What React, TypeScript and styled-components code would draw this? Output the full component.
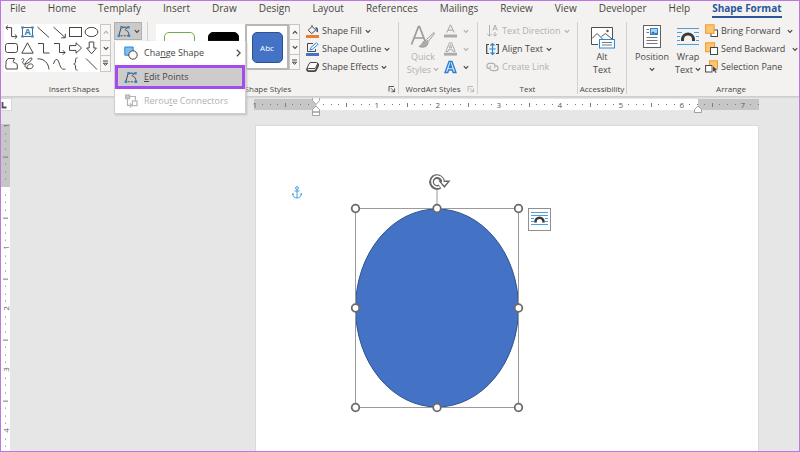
import React from "react";
import styled, { createGlobalStyle, css } from "styled-components";

const INK = "#484644";
const MUTED = "#b3b0ad";
const BLUE = "#2b88d8";
const BRAND = "#2b579a";
const SHAPE = "#4472c4";

const GlobalStyle = createGlobalStyle`
  *, *::before, *::after { box-sizing: border-box; }
  html, body { margin: 0; padding: 0; }
  body {
    font-family: "Open Sans", "Noto Sans", sans-serif;
    font-size: 9px;
    color: ${INK};
    background: #e6e6e6;
  }
  button {
    font: inherit;
    color: inherit;
    background: none;
    border: 0;
    padding: 0;
    margin: 0;
  }
  svg { display: block; flex: none; }
`;

const Frame = styled.div`
  display: flex;
  flex-direction: column;
  height: 100vh;
  min-height: 400px;
  border: 1px solid #b878e6;
  overflow: hidden;
`;

/* ---------- ribbon ---------- */

const Ribbon = styled.header`
  position: relative;
  z-index: 2;
  background: #f3f2f1;
  border-bottom: 1px solid #cfcdcb;
  box-shadow: 0 1px 1px #d8d8d8;
`;

const TabBar = styled.nav`
  display: flex;
  gap: 22px;
  height: 20px;
  padding: 0 9px;
`;

const Tab = styled.button<{ $active?: boolean }>`
  height: 17px;
  font-size: 10px;
  line-height: 14px;
  padding-bottom: 1px;
  white-space: nowrap;
  border-bottom: 2px solid transparent;
  ${(p) =>
    p.$active &&
    css`
      color: ${BRAND};
      font-weight: 700;
      border-bottom-color: ${BRAND};
    `}
`;

const Groups = styled.div`
  display: flex;
  padding: 1px 0 2px;
`;

const Group = styled.section<{ $basis?: number }>`
  display: flex;
  flex-direction: column;
  flex: ${(p) => (p.$basis ? `0 0 ${p.$basis}px` : "1 0 0")};
  min-width: 0;
  height: 72px;
  border-right: 1px solid #d2d0ce;
  &:last-child {
    border-right: 0;
  }
`;

const GroupBody = styled.div<{ $pad?: number; $gap?: number }>`
  display: flex;
  flex: 1;
  align-items: flex-start;
  gap: ${(p) => p.$gap ?? 0}px;
  padding-left: ${(p) => p.$pad ?? 0}px;
`;

const GroupFooter = styled.div<{ $indent?: number }>`
  display: flex;
  align-items: center;
  padding-left: ${(p) => p.$indent ?? 0}px;
`;

const GroupTitle = styled.h2`
  flex: 1;
  margin: 0;
  font-size: 8px;
  font-weight: 400;
  line-height: 10px;
  text-align: center;
  white-space: nowrap;
`;

const Launcher = styled.button<{ $muted?: boolean }>`
  width: 10px;
  height: 10px;
  color: ${(p) => (p.$muted ? MUTED : INK)};
`;

const Gallery = styled.div`
  display: flex;
  margin-top: 2px;
  background: #fff;
`;

const ShapeGrid = styled.div`
  display: grid;
  grid-template-columns: repeat(6, 16px);
  grid-auto-rows: 16px;
`;

const ShapeCell = styled.button`
  width: 16px;
  height: 16px;
`;

const Scroller = styled.div`
  display: flex;
  flex-direction: column;
  width: 11px;
`;

const ScrollButton = styled.button<{ $muted?: boolean }>`
  display: flex;
  flex: 1;
  align-items: center;
  justify-content: center;
  border: 1px solid #c8c6c4;
  background: #f8f7f6;
  color: ${(p) => (p.$muted ? MUTED : INK)};
  & + & {
    border-top: 0;
  }
`;

const Presets = styled.div`
  display: flex;
  height: 46px;
  padding-left: 1px;
`;

const Preset = styled.button<{ $selected?: boolean }>`
  display: flex;
  align-items: center;
  justify-content: center;
  width: 44px;
  height: 46px;
  border: 2px solid ${(p) => (p.$selected ? "#b9b7b5" : "transparent")};
`;

const Swatch = styled.span<{ $fill: string; $line: string }>`
  display: flex;
  align-items: center;
  justify-content: center;
  width: 31px;
  height: 31px;
  border: 1px solid ${(p) => p.$line};
  border-radius: 5px;
  background: ${(p) => p.$fill};
  color: #fff;
  font-size: 8px;
`;

const EditShapeAnchor = styled.div`
  position: relative;
`;

const EditShapeButton = styled.button`
  display: flex;
  align-items: center;
  justify-content: center;
  gap: 3px;
  width: 28px;
  height: 18px;
  background: #cccac8;
  border: 1px solid #b1afad;
`;

const Menu = styled.div`
  position: absolute;
  top: 19px;
  left: 0;
  width: 132px;
  background: #fff;
  border: 1px solid #d0cecc;
  border-top: 0;
  box-shadow: 1px 1px 2px #bdbdbd;
`;

const MenuItem = styled.button<{ $highlighted?: boolean }>`
  display: flex;
  align-items: center;
  gap: 6px;
  width: 100%;
  height: 24px;
  padding: 0 4px 0 9px;
  line-height: 14px;
  text-align: left;
  border: 0;
  &:disabled {
    color: ${MUTED};
  }
  ${(p) =>
    p.$highlighted &&
    css`
      padding: 0 1px 0 6px;
      background: #cdcccb;
      border: 3px solid #a24cf0;
    `}
`;

const MenuText = styled.span`
  flex: 1;
`;

const CommandList = styled.div`
  display: flex;
  flex-direction: column;
  align-items: flex-start;
`;

const Command = styled.button<{ $muted?: boolean }>`
  display: flex;
  align-items: center;
  gap: 3px;
  height: 18px;
  line-height: 14px;
  white-space: nowrap;
  color: ${(p) => (p.$muted ? MUTED : INK)};
`;

const CommandText = styled.span<{ $wide?: boolean }>`
  padding-right: ${(p) => (p.$wide ? 4 : 0)}px;
`;

const WordArtCommand = styled(Command)`
  gap: 6px;
`;

const BigButton = styled.button<{ $muted?: boolean; $width: number }>`
  display: flex;
  flex-direction: column;
  align-items: center;
  width: ${(p) => p.$width}px;
  padding-top: 2px;
  line-height: 13px;
  white-space: nowrap;
  color: ${(p) => (p.$muted ? MUTED : INK)};
`;

const BigLine = styled.span`
  display: flex;
  align-items: center;
  gap: 2px;
  height: 13px;
`;

/* ---------- document area ---------- */

const Workspace = styled.main`
  display: grid;
  grid-template-columns: 11px 1fr;
  grid-template-rows: 15px 1fr;
  flex: 1;
  min-height: 0;
  background: #e6e6e6;
`;

const TabStop = styled.button`
  display: flex;
  align-items: center;
  height: 13px;
  margin-top: 1px;
  background: #fff;
  border: 1px solid #d6d6d6;
  border-left: 0;
`;

const RulerRow = styled.div`
  padding: 2px 40px 0 242px;
`;

const HorizontalRuler = styled.div`
  position: relative;
  display: flex;
  height: 11px;
`;

const VerticalRuler = styled.div`
  position: relative;
  display: flex;
  flex-direction: column;
  width: 9px;
  margin-top: 12px;
`;

const RulerBand = styled.div<{ $size?: number }>`
  flex: ${(p) => (p.$size ? `0 0 ${p.$size}px` : "1")};
  background: ${(p) => (p.$size ? "#c6c6c6" : "#fff")};
`;

const HorizontalMarks = styled.div`
  position: absolute;
  inset: 0 0 0 -3px;
  display: flex;
  overflow: hidden;
`;

const VerticalMarks = styled.div`
  position: absolute;
  inset: -2px 0 0 0;
  display: flex;
  flex-direction: column;
  overflow: hidden;
`;

const Inch = styled.div<{ $vertical?: boolean }>`
  display: grid;
  flex: 0 0 61px;
  ${(p) =>
    p.$vertical
      ? "grid-template-rows: repeat(8, minmax(0, 1fr));"
      : "grid-template-columns: repeat(8, minmax(0, 1fr));"}
`;

const MarkCell = styled.span<{ $vertical?: boolean }>`
  display: flex;
  align-items: center;
  justify-content: center;
  font-size: 8px;
  line-height: 8px;
  color: #5a5a5a;
  ${(p) => p.$vertical && "writing-mode: vertical-rl; transform: rotate(180deg);"}
`;

const Tick = styled.i<{ $long?: boolean; $vertical?: boolean }>`
  background: #7a7a7a;
  width: ${(p) => (p.$vertical && p.$long ? 5 : 1)}px;
  height: ${(p) => (!p.$vertical && p.$long ? 4 : 1)}px;
`;

const IndentMarker = styled.svg<{ $edge: "left" | "right" }>`
  position: absolute;
  top: -2px;
  ${(p) => (p.$edge === "left" ? "left: 58px;" : "right: 57px;")}
`;

const PageArea = styled.div`
  display: flex;
  min-height: 0;
  padding: 13px 40px 0 243px;
`;

const Page = styled.article`
  position: relative;
  flex: 1;
  background: #fff;
  border: 1px solid #d9d9d9;
  border-bottom: 0;
`;

const AnchorMark = styled.svg`
  position: absolute;
  left: 36px;
  top: 60px;
`;

const SelectedShape = styled.svg`
  position: absolute;
  left: 94px;
  top: 44px;
`;

const LayoutOptions = styled.button`
  position: absolute;
  left: 272px;
  top: 82px;
  display: flex;
  align-items: center;
  justify-content: center;
  width: 23px;
  height: 23px;
  background: #fff;
  border: 1px solid #8f8f8f;
`;

/* ---------- icons ---------- */

const line = { fill: "none", stroke: "currentColor", strokeWidth: 1 } as const;

const Chevron = ({ dir = "down" }: { dir?: "down" | "up" | "right" }) => (
  <svg
    width={dir === "right" ? 5 : 6}
    height={dir === "right" ? 8 : 5}
    viewBox={dir === "right" ? "0 0 5 8" : "0 0 6 5"}
    {...line}
    strokeWidth={1.2}
  >
    <path d={dir === "down" ? "M.8 1.2 3 3.4 5.2 1.2" : dir === "up" ? "M.8 3.6 3 1.4 5.2 3.6" : "M.8.7 4.2 4 .8 7.3"} />
  </svg>
);

const MoreIcon = () => (
  <svg width="7" height="7" viewBox="0 0 7 7" {...line}>
    <path d="M1 1h5M1.4 3.2h4.2L3.5 5.4Z" />
  </svg>
);

const LauncherIcon = () => (
  <svg width="8" height="8" viewBox="0 0 8 8" {...line} strokeWidth={0.9}>
    <path d="M1 6.5V1.5h5M3 3.3l3.2 3.2M6.6 3.4v3.3H3.3" />
  </svg>
);

const shapePaths: { name: string; art: React.ReactNode }[] = [
  { name: "Connector: Elbow Double-Arrow", art: <path d="M4 1.5 1.8 3.6 4 5.7M2 3.6h5.6v9H13M10.8 10.4l2.3 2.2-2.3 2.2" /> },
  {
    name: "Text Box",
    art: (
      <>
        <rect x="2.5" y="3.5" width="10" height="9" stroke="#666" />
        <path d="M1.2 3.5h2.6M11.2 3.5h2.6M1.2 12.5h2.6M11.2 12.5h2.6" stroke={BLUE} strokeWidth="2.2" />
        <text x="7.5" y="11.3" textAnchor="middle" fontSize="9" fontWeight="700" fill={BLUE} stroke="none">A</text>
      </>
    ),
  },
  { name: "Line", art: <path d="M1.5 3 13 13.5" /> },
  { name: "Line Arrow", art: <path d="M1.5 3 13 13.5M13.3 9.8v4h-4" /> },
  { name: "Rectangle", art: <rect x="1.5" y="3.5" width="12" height="9" /> },
  { name: "Oval", art: <ellipse cx="7.5" cy="8" rx="6.4" ry="4.6" /> },
  { name: "Rounded Rectangle", art: <rect x="1.5" y="3.5" width="12" height="9" rx="2.2" /> },
  { name: "Isosceles Triangle", art: <path d="M7.5 2.8 13.2 13.2H1.8Z" /> },
  { name: "Connector: Elbow", art: <path d="M2 3.5h5.5v9.5H13.5" /> },
  { name: "Connector: Elbow Arrow", art: <path d="M2 3.5h5.5v9H13M10.8 10.2l2.3 2.3-2.3 2.3" /> },
  { name: "Arrow: Right", art: <path d="M1.5 5.6H8V2.8L13.6 8 8 13.2v-2.8H1.5Z" /> },
  { name: "Arrow: Down", art: <path d="M5.2 2h4.6v6h2.6l-4.9 5.8L2.6 8h2.6Z" /> },
  { name: "Freeform: Shape", art: <path d="M4 2.5h6.5L9 5.6c.6 1.6 4.2 1 4.3 3.4v4H2.2C1 9 2.6 7.5 2 5.2Z" /> },
  { name: "Freeform: Scribble", art: <path d="M1.5 3.5C3 1.5 5 3 3 5.5 1.5 8 5 9 8 7c3-1.5 5-4.500 3.5-5S5 6 5 9.5c0 3.500 6 4 7.5 2s0-4-2.500-3.5-4 4-2 5.5" /> },
  { name: "Arc", art: <path d="M1.5 2.8C8 2.5 12.5 7 13 13.5" /> },
  { name: "Curve", art: <path d="M1.5 8C3 2.5 5.5 2 7 6.5c1.5 5.5 3 7.5 6.5 6.5" /> },
  { name: "Left Brace", art: <path d="M9.5 1.800C7.5 1.800 7.5 3 7.5 5S7 8 5.700 8c1.300 0 1.800 1 1.800 3s0 3.200 2 3.200" /> },
  { name: "Straight Line", art: <path d="M2 2.5 13 13.5" /> },
];

const EditPointsIcon = () => (
  <svg width="14" height="13" viewBox="0 0 14 13" {...line}>
    <path d="M4 3 2 10M4.500 2.200h5M11 2.500C8 3.500 7.500 5 9.500 5.600 11.500 6.200 11.500 8 12 10" />
    <path d="M3.500 10.800h7.500" strokeDasharray="2 1.200" />
    <path d="M3.300 2.200h2.400M10.300 2.200h2.400M.6 10.800H3M10.800 10.800h2.400" stroke={BLUE} strokeWidth="2.400" />
  </svg>
);

const ChangeShapeIcon = () => (
  <svg width="14" height="14" viewBox="0 0 14 14" {...line}>
    <path d="M.8 1h8.400v4.200L5 9.200H.8Z" fill="#83bdec" stroke={BLUE} />
    <circle cx="9" cy="9" r="4.200" fill="#fff" />
  </svg>
);

const RerouteIcon = () => (
  <svg width="14" height="14" viewBox="0 0 14 14" {...line} stroke="#b5b5b5" strokeWidth={1.2}>
    <rect x="1.600" y="1" width="4" height="3.600" fill="#c8c8c8" />
    <path d="M5.600 2.500h5.800v4M3.500 4.600v6.800h4" />
    <rect x="8.400" y="7" width="4.600" height="4.600" />
    <path d="m5.800 9.400 2 2-2 2" />
  </svg>
);

const FillIcon = () => (
  <svg width="13" height="14" viewBox="0 0 13 14" {...line}>
    <path d="M6 2.500 9.800 6 5.800 9.600 2.200 6.200 6 2.500V1" />
    <path d="M9.500 3.800c1.800.2 2 1.800 1.600 4.200" stroke="#2b579a" strokeWidth="1.600" />
    <rect x="0" y="11" width="13" height="3" fill="#ed7d31" stroke="none" />
  </svg>
);

const OutlineIcon = () => (
  <svg width="13" height="14" viewBox="0 0 13 14" {...line}>
    <path d="M7 1.500H1.500v8h8V7" />
    <path d="M4 8 5 5.400 10.500.8 12 2.400 6.500 7.200Z" fill="#fff" stroke={BLUE} />
    <rect x="0" y="11" width="13" height="3" fill={SHAPE} stroke="none" />
  </svg>
);

const EffectsIcon = () => (
  <svg width="13" height="14" viewBox="0 0 13 14" {...line}>
    <path d="M5 2.500h5.500q1.500 0 1 1.500L9.800 7.500Q9.500 8.500 8 8.500H2.500Q.8 8.500 1.500 7L3 4q.6-1.500 2-1.500Z" fill="#fff" />
    <path d="M1 8.200v1.600q.3 1.400 1.800 1.400H8q1.400 0 2-1.200l2.200-4.500V3.600" strokeWidth="1.700" />
  </svg>
);

const QuickStylesIcon = () => (
  <svg width="26" height="26" viewBox="0 0 26 26" {...line} stroke="#9a9a9a">
    <path d="M1.500 20.500 8.500 2.500h1l6.500 17M4.300 14h9" strokeWidth="1.700" />
    <path d="M24 8.500 16.500 15.500 18.300 17.500 24.500 9.500Z" fill="#f3f2f1" />
    <path d="M16 16.500c-3.500-.5-3 4-7 6 4 1.500 9 .5 9-4Z" fill="#ababab" />
  </svg>
);

const TextFillIcon = () => (
  <svg width="13" height="14" viewBox="0 0 13 14" {...line} stroke="#a3a3a3">
    <path d="M2.800 8.500 6.500.8l3.700 7.700M4 6.200h5" />
    <rect x="0" y="10.500" width="13" height="3" fill="#ababab" stroke="none" />
  </svg>
);

const TextOutlineIcon = () => (
  <svg width="13" height="14" viewBox="0 0 13 14" {...line} stroke="#a3a3a3" strokeWidth={0.9}>
    <path d="M1.800 9.500 5.400.8h2.200l3.600 8.700H9l-.6-1.800H4.600L4 9.500ZM5.300 5.900h2.400L6.500 2.800Z" />
    <rect x="0" y="10.800" width="13" height="2.800" fill="#ababab" stroke="none" />
  </svg>
);

const TextEffectsIcon = () => (
  <svg width="13" height="14" viewBox="0 0 13 14" {...line} stroke="#2b7cd3" strokeWidth={1.3}>
    <path d="M1 12.500 5 1.500h3l4 11H9.200l-.8-2.500H4.600l-.8 2.500ZM5.400 7.500h2.200L6.500 4Z" fill="#d6e8f8" />
  </svg>
);

const DirectionIcon = () => (
  <svg width="13" height="14" viewBox="0 0 13 14" {...line} stroke="#b0b0b0">
    <path d="M3.500 1v11M1.200 9.800l2.300 2.400 2.300-2.400M9 8v4M7 10.200l2 2 2-2M6.800 6.500 9 1l2.400 5.500M7.500 4.800h3" />
  </svg>
);

const AlignIcon = () => (
  <svg width="13" height="14" viewBox="0 0 13 14" {...line}>
    <path d="M3 2.500H.7v9H3M10 2.500h2.300v9H10" strokeWidth="1.200" />
    <path d="M6.500 1.500v11M4.500 3.500l2-2 2 2M4.500 10.500l2 2 2-2M3.300 7h6.400" stroke={BLUE} strokeWidth="1.200" />
  </svg>
);

const LinkIcon = () => (
  <svg width="13" height="14" viewBox="0 0 13 14" {...line} stroke="#b0b0b0" strokeWidth={1.2}>
    <path d="M4 8.500h-.5a2.600 2.600 0 0 1 0-5.200h3a2.600 2.600 0 0 1 1.600 4.600" />
    <path d="M8.800 5.500h.7a2.600 2.600 0 0 1 0 5.200h-3A2.600 2.600 0 0 1 5 6" />
  </svg>
);

const AltTextIcon = () => (
  <svg width="26" height="26" viewBox="0 0 26 26" {...line}>
    <path d="M9 20.500H2.500v-17h21V15" fill="#fff" stroke="#505050" />
    <path d="m3 14.500 5-5 5.500 5.500M12.500 12.500l4-3 6.500 5.500" stroke="#505050" />
    <circle cx="18.500" cy="7" r="1.200" fill="#505050" stroke="none" />
    <rect x="10.500" y="15.500" width="15" height="8.500" fill="#fff" stroke={BLUE} />
    <path d="M13 18.500h10M13 21h10" stroke="#777" />
  </svg>
);

const PositionIcon = () => (
  <svg width="22" height="26" viewBox="0 0 22 26" {...line}>
    <rect x="2.500" y="1.500" width="17" height="22" fill="#fff" stroke="#606060" />
    <rect x="9.500" y="4.500" width="7" height="6" fill="#a9d3f5" stroke={BLUE} />
    <path d="m10 9.500 2-2 2 2 1-1 1.500 1.500Z" fill="#2b579a" stroke="none" />
    <path d="M5.500 5.500h2.500M5.500 8.500h2.500M5.500 13.500h11M5.500 16.500h11M5.500 19.500h11" stroke="#777" />
  </svg>
);

const WrapIcon = () => (
  <svg width="24" height="26" viewBox="0 0 24 26" {...line}>
    <path d="M1 4.500h22M1 8.500h5M18 8.500h5M1 12.500h3M20 12.500h3M1 16.500h3M20 16.500h3M1 20.500h22" stroke="#4ba0e0" />
    <path d="M6.500 17V15.500a5.500 5.500 0 0 1 11 0V17" stroke="#3a3a3a" strokeWidth="3" />
  </svg>
);

const ForwardIcon = () => (
  <svg width="13" height="14" viewBox="0 0 13 14" {...line}>
    <rect x="6" y="6" width="6.500" height="6.500" fill="#fff" />
    <rect x=".6" y=".8" width="8.500" height="8.500" fill="#fcc56f" stroke="#ee9a32" />
  </svg>
);

const BackwardIcon = () => (
  <svg width="13" height="14" viewBox="0 0 13 14" {...line}>
    <rect x=".6" y=".8" width="9" height="9" fill="#fcc56f" stroke="#ee9a32" />
    <rect x="5.500" y="5.500" width="7" height="7" fill="#fff" />
  </svg>
);

const SelectionIcon = () => (
  <svg width="13" height="14" viewBox="0 0 13 14" {...line}>
    <rect x="4.500" y=".8" width="8" height="8" fill="#fcc56f" stroke="#ee9a32" />
    <rect x=".6" y="5.500" width="6.500" height="6.500" fill="#fff" />
    <path d="M7.500 5.500v7l1.700-1.600 1.300 2.400 1.300-.7-1.200-2.300h2.100Z" fill="#484644" stroke="#fff" strokeWidth=".4" />
  </svg>
);

const Handle = ({ x, y }: { x: number; y: number }) => (
  <circle cx={x} cy={y} r="3.800" fill="#fff" stroke="#6b6b6b" strokeWidth="1.800" />
);

/* ---------- pieces ---------- */

const tabs = [
  "File", "Home", "Templafy", "Insert", "Draw", "Design", "Layout", "References",
  "Mailings", "Review", "View", "Developer", "Help", "Shape Format",
];

type CommandSpec = { label: string; icon: React.ReactNode; drop?: boolean; muted?: boolean; wide?: boolean };

const CommandColumn = ({ items }: { items: CommandSpec[] }) => (
  <CommandList>
    {items.map((c) => (
      <Command key={c.label} $muted={c.muted} disabled={c.muted}>
        {c.icon}
        <CommandText $wide={c.wide}>{c.label}</CommandText>
        {c.drop && <Chevron />}
      </Command>
    ))}
  </CommandList>
);

const GalleryScroller = ({ atTop }: { atTop?: boolean }) => (
  <Scroller>
    <ScrollButton aria-label="Previous row" $muted={atTop}><Chevron dir="up" /></ScrollButton>
    <ScrollButton aria-label="Next row"><Chevron /></ScrollButton>
    <ScrollButton aria-label="More"><MoreIcon /></ScrollButton>
  </Scroller>
);

const Marks = ({ labels, vertical }: { labels: string[]; vertical?: boolean }) => (
  <>
    {labels.map((label, i) => (
      <Inch key={i} $vertical={vertical}>
        {Array.from({ length: 8 }, (_, n) => (
          <MarkCell key={n} $vertical={vertical}>
            {n === 0 ? label : <Tick $long={n === 4} $vertical={vertical} />}
          </MarkCell>
        ))}
      </Inch>
    ))}
  </>
);

export default function App() {
  return (
    <>
      <GlobalStyle />
      <Frame>
        <Ribbon>
          <TabBar aria-label="Ribbon tabs">
            {tabs.map((t) => (
              <Tab key={t} $active={t === "Shape Format"}>{t}</Tab>
            ))}
          </TabBar>
          <Groups>
            <Group $basis={147}>
              <GroupBody $pad={3} $gap={3}>
                <Gallery>
                  <ShapeGrid>
                    {shapePaths.map((s) => (
                      <ShapeCell key={s.name} aria-label={s.name}>
                        <svg width="16" height="16" viewBox="0 0 16 16" {...line}>{s.art}</svg>
                      </ShapeCell>
                    ))}
                  </ShapeGrid>
                  <GalleryScroller atTop />
                </Gallery>
                <EditShapeAnchor>
                  <EditShapeButton aria-label="Edit Shape" aria-expanded="true">
                    <EditPointsIcon />
                    <Chevron />
                  </EditShapeButton>
                  <Menu role="menu">
                    <MenuItem role="menuitem">
                      <ChangeShapeIcon />
                      <MenuText>Cha<u>n</u>ge Shape</MenuText>
                      <Chevron dir="right" />
                    </MenuItem>
                    <MenuItem role="menuitem" $highlighted>
                      <EditPointsIcon />
                      <MenuText><u>E</u>dit Points</MenuText>
                    </MenuItem>
                    <MenuItem role="menuitem" disabled>
                      <RerouteIcon />
                      <MenuText>Rerou<u>t</u>e Connectors</MenuText>
                    </MenuItem>
                  </Menu>
                </EditShapeAnchor>
              </GroupBody>
              <GroupFooter><GroupTitle>Insert Shapes</GroupTitle></GroupFooter>
            </Group>

            <Group $basis={251}>
              <GroupBody $pad={8} $gap={6}>
                <Gallery>
                  <Presets>
                    <Preset aria-label="Outline, green"><Swatch $fill="#fff" $line="#70ad47" /></Preset>
                    <Preset aria-label="Fill, black"><Swatch $fill="#000" $line="#000" /></Preset>
                    <Preset $selected><Swatch $fill={SHAPE} $line="#2f528f">Abc</Swatch></Preset>
                  </Presets>
                  <GalleryScroller />
                </Gallery>
                <CommandColumn
                  items={[
                    { label: "Shape Fill", icon: <FillIcon />, drop: true },
                    { label: "Shape Outline", icon: <OutlineIcon />, drop: true },
                    { label: "Shape Effects", icon: <EffectsIcon />, drop: true },
                  ]}
                />
              </GroupBody>
              <GroupFooter>
                <GroupTitle>Shape Styles</GroupTitle>
                <Launcher aria-label="Format Shape"><LauncherIcon /></Launcher>
              </GroupFooter>
            </Group>

            <Group $basis={79}>
              <GroupBody $pad={6} $gap={3}>
                <BigButton $muted disabled $width={36}>
                  <QuickStylesIcon />
                  <BigLine>Quick</BigLine>
                  <BigLine>Styles <Chevron /></BigLine>
                </BigButton>
                <CommandList>
                  <WordArtCommand $muted disabled aria-label="Text Fill"><TextFillIcon /><Chevron /></WordArtCommand>
                  <WordArtCommand $muted disabled aria-label="Text Outline"><TextOutlineIcon /><Chevron /></WordArtCommand>
                  <WordArtCommand aria-label="Text Effects"><TextEffectsIcon /><Chevron /></WordArtCommand>
                </CommandList>
              </GroupBody>
              <GroupFooter>
                <GroupTitle>WordArt Styles</GroupTitle>
                <Launcher $muted aria-label="Format Text Effects"><LauncherIcon /></Launcher>
              </GroupFooter>
            </Group>

            <Group $basis={100}>
              <GroupBody $pad={8}>
                <CommandColumn
                  items={[
                    { label: "Text Direction", icon: <DirectionIcon />, drop: true, muted: true },
                    { label: "Align Text", icon: <AlignIcon />, drop: true },
                    { label: "Create Link", icon: <LinkIcon />, muted: true },
                  ]}
                />
              </GroupBody>
              <GroupFooter><GroupTitle>Text</GroupTitle></GroupFooter>
            </Group>

            <Group $basis={49}>
              <GroupBody $pad={6}>
                <BigButton $width={36}>
                  <AltTextIcon />
                  <BigLine>Alt</BigLine>
                  <BigLine>Text</BigLine>
                </BigButton>
              </GroupBody>
              <GroupFooter><GroupTitle>Accessibility</GroupTitle></GroupFooter>
            </Group>

            <Group>
              <GroupBody $pad={6}>
                <BigButton $width={38}>
                  <PositionIcon />
                  <BigLine>Position</BigLine>
                  <BigLine><Chevron /></BigLine>
                </BigButton>
                <BigButton $width={34}>
                  <WrapIcon />
                  <BigLine>Wrap</BigLine>
                  <BigLine>Text <Chevron /></BigLine>
                </BigButton>
                <CommandColumn
                  items={[
                    { label: "Bring Forward", icon: <ForwardIcon />, drop: true, wide: true },
                    { label: "Send Backward", icon: <BackwardIcon />, drop: true, wide: true },
                    { label: "Selection Pane", icon: <SelectionIcon /> },
                  ]}
                />
              </GroupBody>
              <GroupFooter $indent={36}><GroupTitle>Arrange</GroupTitle></GroupFooter>
            </Group>
          </Groups>
        </Ribbon>

        <Workspace>
          <TabStop aria-label="Left tab">
            <svg width="8" height="8" viewBox="0 0 8 8" fill="none" stroke="#555" strokeWidth="1.800">
              <path d="M1.500 1v5.500h4" />
            </svg>
          </TabStop>
          <RulerRow>
            <HorizontalRuler>
              <RulerBand $size={62} />
              <RulerBand />
              <RulerBand $size={61} />
              <HorizontalMarks>
                <Marks labels={["1", "", "1", "2", "3", "4", "5", "6", "7"]} />
              </HorizontalMarks>
              <IndentMarker $edge="left" width="8" height="19" viewBox="0 0 8 19" fill="#fff" stroke="#a0a0a0">
                <path d="M.5.5h7v3L4 7.500.5 3.500ZM4 9l3.500 3.500v2.500h-7v-2.500ZM.5 15h7v3.500h-7Z" />
              </IndentMarker>
              <IndentMarker $edge="right" width="8" height="19" viewBox="0 0 8 19" fill="#fff" stroke="#a0a0a0">
                <path d="M4 9l3.500 3.500v3h-7v-3Z" />
              </IndentMarker>
            </HorizontalRuler>
          </RulerRow>

          <VerticalRuler>
            <RulerBand $size={63} />
            <RulerBand />
            <VerticalMarks>
              <Marks vertical labels={["1", "", "1", "2", "3", "4"]} />
            </VerticalMarks>
          </VerticalRuler>
          <PageArea>
            <Page>
              <AnchorMark width="10" height="13" viewBox="0 0 10 13" fill="none" stroke="#4a9fe0">
                <circle cx="5" cy="2" r="1.400" />
                <path d="M5 3.400V12M2.500 5h5M.7 7.500C.8 10.500 2.500 12 5 12s4.200-1.500 4.300-4.500M0 9l.8-1.500L2 8.700M8 8.700l1.200-1.200L10 9" />
              </AnchorMark>
              <SelectedShape width="176" height="244" viewBox="0 0 176 244" role="img" aria-label="Blue oval, selected">
                <ellipse cx="87" cy="138" rx="81.500" ry="99" fill={SHAPE} stroke="#2f528f" />
                <path d="M5.500 38.500h163v199h-163ZM87 16v22" fill="none" stroke="#9a9a9a" />
                <path d="M92.400 12A5.400 5.400 0 1 0 90 16.500" fill="none" stroke="#666" strokeWidth="4.800" />
                <path d="M89.800 11.200H99l-4.600 5.600Z" fill="#fff" stroke="#666" strokeWidth="1.400" />
                <path d="M92.600 13.500A5.500 5.500 0 1 0 89.600 16.700" fill="none" stroke="#fff" strokeWidth="1.600" />
                {[38.5, 138, 237.5].map((y) =>
                  [5.5, 87, 168.5].map((x) =>
                    x === 87 && y === 138 ? null : <Handle key={`${x}-${y}`} x={x} y={y} />
                  )
                )}
              </SelectedShape>
              <LayoutOptions aria-label="Layout Options">
                <svg width="19" height="19" viewBox="0 0 19 19" fill="none">
                  <path d="M1 2.500h17M1 5.500h17M1 8.500h3M15 8.500h3M1 11.500h3M15 11.500h3M1 14.500h17" stroke="#4ba0e0" />
                  <path d="M5.500 12.500v-.8a4 4 0 0 1 8 0v.8" stroke="#3a3a3a" strokeWidth="2.600" />
                </svg>
              </LayoutOptions>
            </Page>
          </PageArea>
        </Workspace>
      </Frame>
    </>
  );
}
